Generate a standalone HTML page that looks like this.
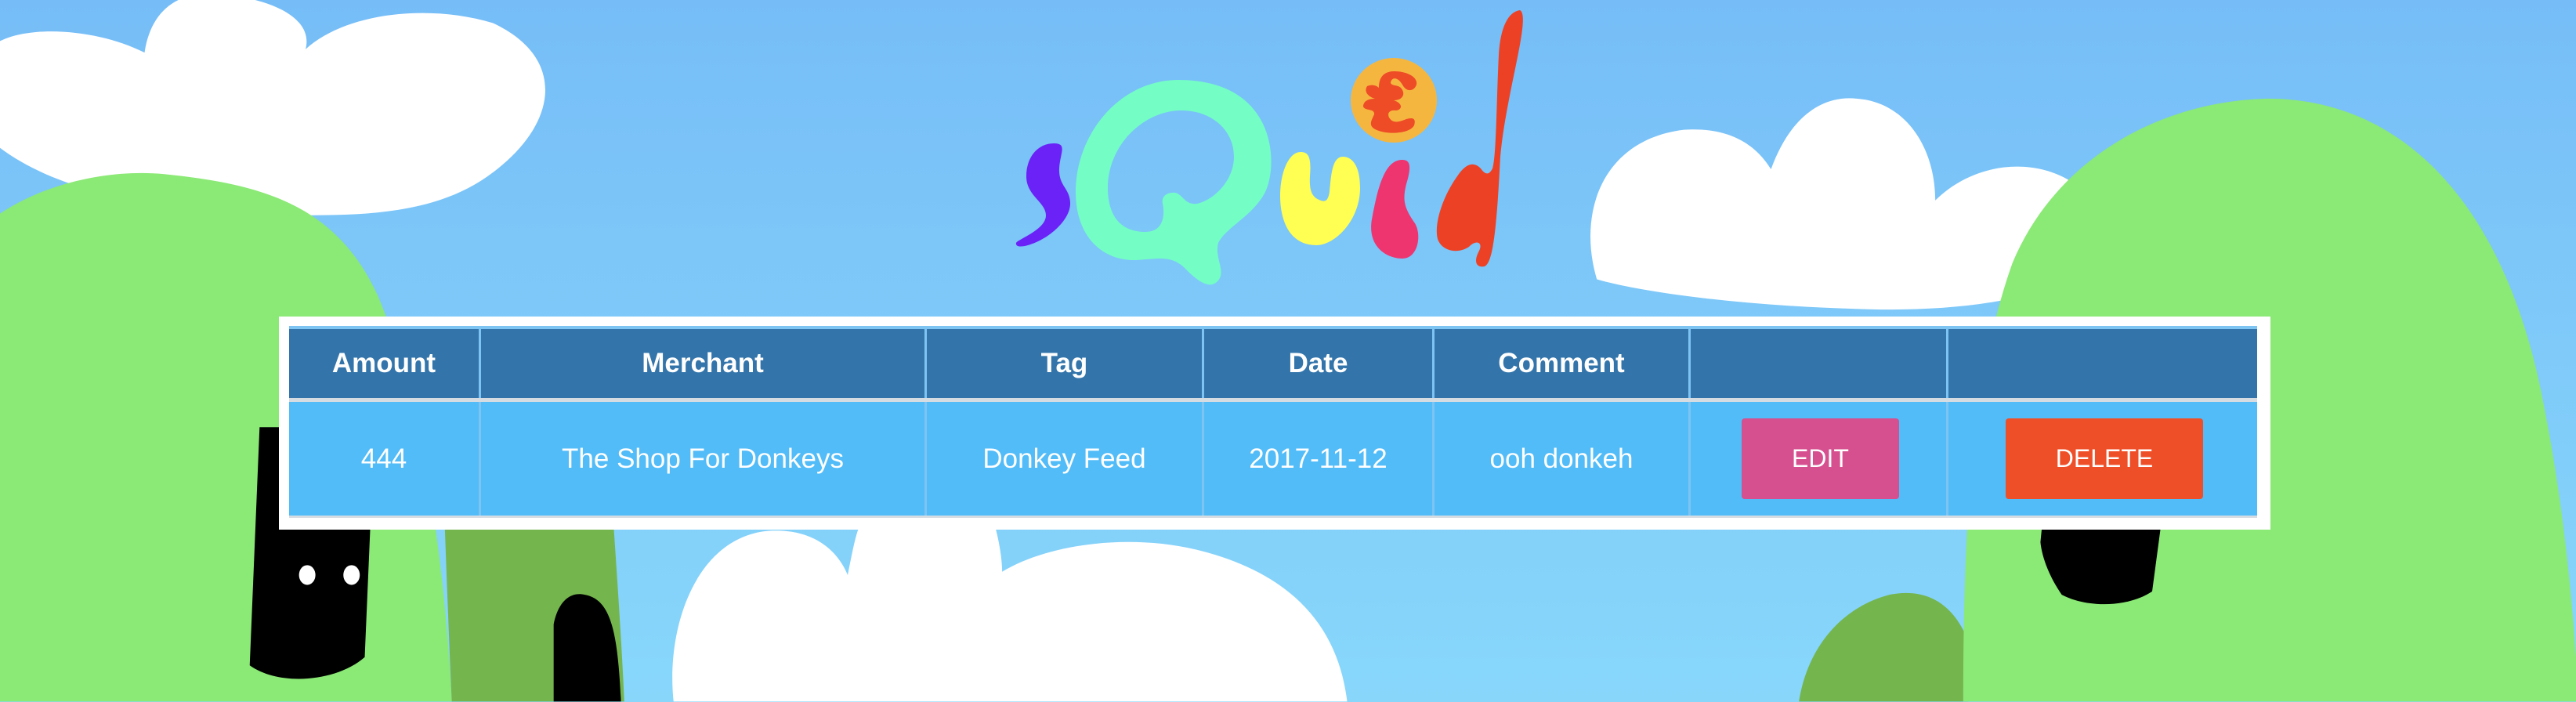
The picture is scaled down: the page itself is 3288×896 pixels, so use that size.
<!DOCTYPE html>
<html><head><meta charset="utf-8"><style>
html,body{margin:0;padding:0;width:3288px;height:896px;overflow:hidden}
body{background:linear-gradient(#76bdf7,#88d7fb);position:relative;font-family:"Liberation Sans",sans-serif}
svg{position:absolute;left:0;top:0}
.frame{position:absolute;left:356px;top:404px;width:2542px;height:272px;background:#fff}
.tbl{position:absolute;left:369px;top:416px;width:2512px;height:245px;background:#7ec4f2}
.cell{position:absolute;display:flex;align-items:center;justify-content:center;color:#fff;font-size:35px}
.h{top:420px;height:88px;background:#3375ab;font-weight:bold}
.b{top:513px;height:145px;background:#52bcf8}
.sep{position:absolute;left:369px;top:508px;width:2512px;height:5px;background:#d6dde2}
.sep2{position:absolute;left:369px;top:658px;width:2512px;height:3px;background:#d6dde2}
.btn{position:absolute;top:534px;height:103px;color:#fff;font-size:32px;display:flex;align-items:center;justify-content:center;border-radius:4px}
</style></head><body>
<svg width="3288" height="896" viewBox="0 0 1568 427.3" preserveAspectRatio="none">
<!-- top left cloud -->
<path fill="#fff" d="M0,25 C20,15 60,18 88,32 C92,5 110,-8 140,-3 C175,2 190,15 186,30 C210,8 260,2 300,14 C345,35 340,75 300,105 C270,128 230,131 190,131 C110,131 40,120 0,90 Z"/>
<!-- right cloud -->
<path fill="#fff" d="M972,170 C960,130 975,85 1025,79 C1055,77 1070,90 1078,103 C1090,70 1110,58 1130,60 C1160,62 1178,90 1178,122 C1200,100 1235,95 1260,110 L1260,170 C1230,185 1180,190 1130,188 C1060,186 1000,178 972,170 Z"/>
<!-- bottom cloud -->
<path fill="#fff" d="M410,427 C405,380 425,325 470,323 C500,322 512,340 516,350 C520,330 522,320 525,318 L605,318 C608,328 610,340 610,348 C640,330 690,325 730,335 C790,350 815,385 820,427 Z"/>
<!-- left hill -->
<path fill="#8be976" d="M0,130 C30,110 70,103 100,106 C160,112 205,125 230,180 C255,240 270,330 275,427 L0,427 Z"/>
<path fill="#75b54e" d="M268,240 L368,240 C372,300 378,380 380,427 L275,427 C272,360 270,300 268,240 Z"/>
<!-- left black creature -->
<path fill="#000" d="M158,260 L228,260 L222,400 C205,415 170,418 152,405 Z"/>
<ellipse cx="187" cy="350" rx="5" ry="6" fill="#fff"/>
<ellipse cx="214" cy="350" rx="5" ry="6" fill="#fff"/>
<path fill="#000" d="M337,427 L337,380 C340,365 348,360 356,362 C372,365 376,385 378,427 Z"/>
<!-- right dark green -->
<path fill="#75b54e" d="M1095,427 C1100,395 1120,370 1150,362 C1175,357 1190,370 1198,390 L1198,427 Z"/>
<!-- right hill -->
<path fill="#8be976" d="M1195,427 C1195,320 1200,230 1225,160 C1250,100 1310,62 1380,60 C1460,60 1520,120 1545,230 C1560,300 1565,360 1568,400 L1568,427 Z"/>
<path fill="#000" d="M1245,300 L1318,300 L1310,360 C1295,370 1270,370 1255,362 C1248,352 1243,340 1242,330 Z"/>
</svg>
<!-- logo -->
<svg width="3288" height="896" viewBox="0 0 3288 896">
<path fill="#6a22f7" d="M1345,183 C1325,183 1310,200 1310,225 C1310,250 1335,258 1335,275 C1335,293 1300,305 1297,310 C1296,316 1305,315 1312,313 C1340,305 1366,280 1366,260 C1366,240 1351,238 1352,215 C1353,195 1363,183 1345,183 Z"/>
<path fill="#74fdc5" fill-rule="evenodd" d="M1504,102 C1430,102 1373,170 1373,245 C1373,300 1405,333 1450,332 C1480,330 1497,325 1515,345 C1530,360 1545,370 1555,358 C1565,345 1550,330 1555,310 C1565,290 1600,275 1615,245 C1632,210 1630,102 1504,102 Z M1508,141 C1460,141 1414,185 1414,240 C1414,275 1430,296 1462,296 C1485,296 1487,275 1484,260 C1482,250 1490,245 1500,246 C1510,248 1512,262 1528,260 C1550,255 1575,230 1575,200 C1575,165 1545,141 1508,141 Z"/>
<path fill="#fffe53" d="M1660,194 C1645,194 1634,220 1634,250 C1634,280 1645,313 1680,313 C1705,313 1736,280 1736,240 C1736,210 1725,200 1714,200 C1700,200 1699,225 1697,245 C1695,256 1692,258 1686,256 C1675,252 1671,245 1672,225 C1674,200 1670,194 1660,194 Z"/>
<path fill="#ee3570" d="M1790,204 C1770,204 1760,230 1751,280 C1745,315 1770,330 1790,330 C1810,330 1815,300 1806,285 C1792,265 1790,255 1795,235 C1802,212 1800,204 1790,204 Z"/>
<ellipse cx="1779" cy="128" rx="55" ry="54" fill="#f5b640"/>
<path fill="#ee4b27" d="M1780,91 C1765,91 1760,100 1760,112 C1755,108 1750,108 1745,110 C1740,118 1748,124 1755,126 C1745,126 1740,130 1740,136 C1742,142 1755,138 1754,146 C1750,155 1745,162 1760,167 C1775,172 1800,170 1805,160 C1808,150 1802,150 1795,152 C1785,156 1778,158 1773,150 C1770,143 1775,140 1782,141 C1790,140 1791,132 1779,128 C1790,128 1795,120 1788,112 C1784,108 1775,110 1775,105 C1777,98 1784,98 1790,108 C1795,118 1805,117 1808,108 C1810,98 1795,91 1780,91 Z"/>
<path fill="#ed4126" d="M1940,13 C1925,15 1915,35 1913,70 C1910,130 1910,200 1905,215 C1900,225 1895,222 1890,215 C1880,205 1870,210 1860,225 C1842,250 1830,285 1835,305 C1840,320 1860,325 1875,315 C1885,305 1893,310 1888,320 C1880,335 1885,342 1895,340 C1905,335 1910,300 1915,200 C1922,120 1955,20 1940,13 Z"/>
</svg>
<div class="frame"></div>
<div class="tbl"></div>
<div class="cell h" style="left:369px;width:242px">Amount</div>
<div class="cell h" style="left:614px;width:566px">Merchant</div>
<div class="cell h" style="left:1183px;width:351px">Tag</div>
<div class="cell h" style="left:1537px;width:291px">Date</div>
<div class="cell h" style="left:1831px;width:324px">Comment</div>
<div class="cell h" style="left:2158px;width:326px"></div>
<div class="cell h" style="left:2487px;width:394px"></div>
<div class="sep"></div>
<div class="cell b" style="left:369px;width:242px">444</div>
<div class="cell b" style="left:614px;width:566px">The Shop For Donkeys</div>
<div class="cell b" style="left:1183px;width:351px">Donkey Feed</div>
<div class="cell b" style="left:1537px;width:291px">2017-11-12</div>
<div class="cell b" style="left:1831px;width:324px">ooh donkeh</div>
<div class="cell b" style="left:2158px;width:326px"></div>
<div class="cell b" style="left:2487px;width:394px"></div>
<div class="sep2"></div>
<div class="btn" style="left:2223px;width:201px;background:#d6508f">EDIT</div>
<div class="btn" style="left:2560px;width:252px;background:#ef4f28">DELETE</div>
</body></html>
